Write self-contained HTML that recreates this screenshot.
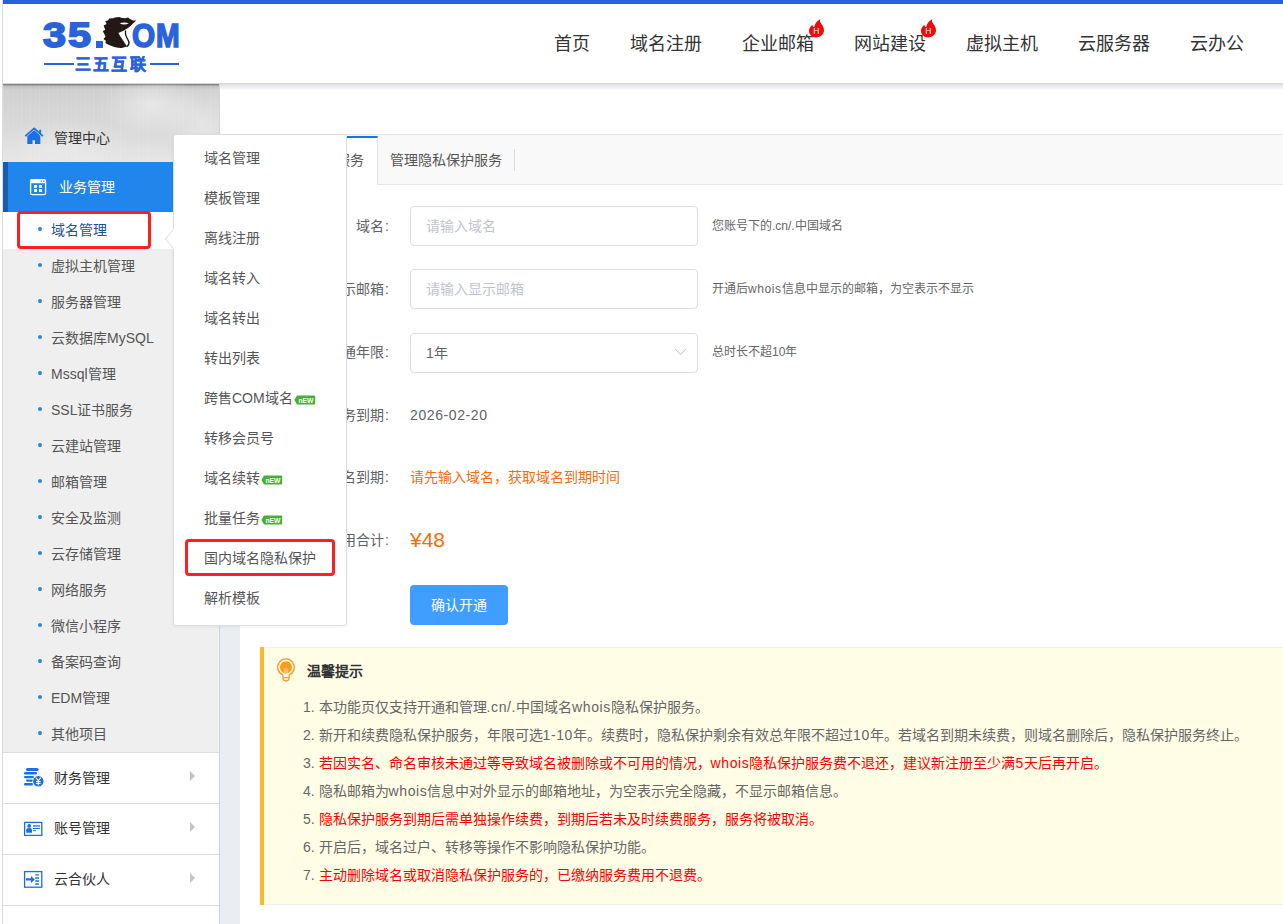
<!DOCTYPE html>
<html lang="zh-CN"><head><meta charset="utf-8">
<style>
*{margin:0;padding:0;box-sizing:border-box}
html,body{width:1283px;height:924px;overflow:hidden;background:#fff}
body{position:relative;font-family:"Liberation Sans",sans-serif;color:#333;font-size:14px}
.abs{position:absolute}
.t{position:absolute;white-space:nowrap;line-height:1}
/* frame */
#lline{left:2px;top:0;width:1px;height:924px;background:#dcdcdc}
#topbar{left:3px;top:0;width:1280px;height:4px;background:#2563de}
#header{left:3px;top:4px;width:1280px;height:79px;background:#fff}
#hshadow{left:220px;top:84px;width:1063px;height:6px;background:linear-gradient(#dcdee1,rgba(255,255,255,0))}
#hline{left:3px;top:83px;width:1280px;height:1px;background:#d3d6da}
/* sidebar */
#side{left:3px;top:83px;width:216px;height:841px;background:#fff}
#sborder{left:219px;top:83px;width:1px;height:841px;background:#d4d4d4}
#strip{left:220px;top:134px;width:20px;height:790px;background:#eaedf2}
#tex{left:3px;top:83px;width:216px;height:79px;
 background:
 repeating-linear-gradient(90deg,rgba(255,255,255,.07) 0 1px,rgba(255,255,255,0) 1px 5px,rgba(255,255,255,.04) 5px 6px,rgba(255,255,255,0) 6px 9px),
 radial-gradient(ellipse 50px 30px at 150px 22px,rgba(255,255,255,.45),rgba(255,255,255,0)),
 radial-gradient(ellipse 40px 40px at 200px 40px,rgba(255,255,255,.3),rgba(255,255,255,0)),
 radial-gradient(ellipse 70px 25px at 60px 62px,rgba(255,255,255,.25),rgba(255,255,255,0)),
 linear-gradient(#d3d6da 0,#d3d6da 1px,#7d7d7d 1px,#8a8a8a 2px,#c0c0c0 3px,#d0d0d0 7px,#d6d6d6 30px,#dcdcdc 55px,#e6e6e6 79px)}
#active{left:3px;top:162px;width:216px;height:50px;background:#2186ec;border-left:5px solid #1a5bab}
#sub{left:3px;top:212px;width:216px;height:540px;background:#efefef}
#subsel{left:3px;top:212px;width:170px;height:37px;background:#fff}
.sitem{position:absolute;left:51px;font-size:14px;color:#555;line-height:1}
.dot{position:absolute;left:38px;width:4px;height:4px;border-radius:50%;background:#2385e8}
.sep{position:absolute;left:3px;width:216px;height:1px;background:#dedede}
.arr{position:absolute;left:190px;width:0;height:0;border-left:5px solid #c4c4c4;border-top:5px solid transparent;border-bottom:5px solid transparent}
</style></head><body>
<div id="lline" class="abs"></div>
<div id="header" class="abs"></div>
<div id="topbar" class="abs"></div>

<div id="side" class="abs"></div>
<div id="tex" class="abs"></div>
<div id="sborder" class="abs"></div>
<div id="strip" class="abs"></div>
<div id="hshadow" class="abs"></div>
<div id="hline" class="abs"></div>
<div id="active" class="abs"></div>
<div id="sub" class="abs"></div>
<div id="subsel" class="abs"></div>
<div class="dot" style="top:227px"></div><div class="sitem" style="top:223px;color:#1d4f9e">域名管理</div>
<div class="dot" style="top:263px"></div><div class="sitem" style="top:259px">虚拟主机管理</div>
<div class="dot" style="top:299px"></div><div class="sitem" style="top:295px">服务器管理</div>
<div class="dot" style="top:335px"></div><div class="sitem" style="top:331px">云数据库MySQL</div>
<div class="dot" style="top:371px"></div><div class="sitem" style="top:367px">Mssql管理</div>
<div class="dot" style="top:407px"></div><div class="sitem" style="top:403px">SSL证书服务</div>
<div class="dot" style="top:443px"></div><div class="sitem" style="top:439px">云建站管理</div>
<div class="dot" style="top:479px"></div><div class="sitem" style="top:475px">邮箱管理</div>
<div class="dot" style="top:515px"></div><div class="sitem" style="top:511px">安全及监测</div>
<div class="dot" style="top:551px"></div><div class="sitem" style="top:547px">云存储管理</div>
<div class="dot" style="top:587px"></div><div class="sitem" style="top:583px">网络服务</div>
<div class="dot" style="top:623px"></div><div class="sitem" style="top:619px">微信小程序</div>
<div class="dot" style="top:659px"></div><div class="sitem" style="top:655px">备案码查询</div>
<div class="dot" style="top:695px"></div><div class="sitem" style="top:691px">EDM管理</div>
<div class="dot" style="top:731px"></div><div class="sitem" style="top:727px">其他项目</div>
<div class="sep" style="top:752px"></div>
<div class="sep" style="top:803px"></div>
<div class="sep" style="top:854px"></div>
<div class="sep" style="top:905px"></div>
<div class="arr" style="top:771px"></div>
<div class="arr" style="top:822px"></div>
<div class="arr" style="top:873px"></div>
<svg class="abs" style="left:20px;top:122px" width="30" height="28" viewBox="0 0 30 28"><path d="M5.3 14.2L14.2 6.3L22.9 14.2" fill="none" stroke="#1a6ee6" stroke-width="1.7"/><rect x="19.2" y="7.8" width="1.9" height="3.2" fill="#1a6ee6"/><path d="M7.3 14.2L14.2 8.2L20.3 13.7V22H15V18.3H12.5V22H7.3z" fill="#1a6ee6"/></svg>
<div class="t" style="left:54px;top:131px;font-size:14px;color:#333">管理中心</div>
<svg class="abs" style="left:24px;top:173px" width="30" height="28" viewBox="0 0 30 28"><rect x="6.6" y="6.6" width="15" height="15" rx="1.6" fill="none" stroke="#fff" stroke-width="1.3"/><rect x="6.6" y="6.6" width="15" height="3.6" fill="#fff"/><circle cx="17.3" cy="8.3" r=".75" fill="#2385e8"/><circle cx="19.8" cy="8.3" r=".75" fill="#2385e8"/><rect x="10" y="12" width="3" height="2.8" fill="#fff"/><rect x="15" y="12" width="3" height="2.8" fill="#fff"/><rect x="10" y="16" width="3" height="3" fill="#fff"/><rect x="15" y="16" width="3" height="3" fill="#fff"/></svg>
<div class="t" style="left:59px;top:180px;font-size:14px;color:#fff">业务管理</div>
<svg class="abs" style="left:18px;top:762px" width="32" height="28" viewBox="0 0 32 28"><g fill="#1a6ee6"><rect x="8" y="6" width="12.7" height="3" rx="1.5"/><rect x="6" y="10" width="13" height="2.6" rx="1.3"/><rect x="6" y="14" width="10" height="2.3" rx="1.1"/><rect x="8" y="17.5" width="7" height="2.2" rx="1.1"/><rect x="6" y="21" width="9" height="2.6" rx="1.3"/></g><circle cx="20.3" cy="19.3" r="5.8" fill="#fff"/><circle cx="20.3" cy="19.3" r="5.2" fill="#1a6ee6"/><path d="M17.8 15.5L20.3 18.8L22.8 15.5M20.3 18.8V23.5M18 19.6H22.6M18 21.5H22.6" fill="none" stroke="#fff" stroke-width="1.1"/></svg>
<div class="t" style="left:54px;top:771px;font-size:14px;color:#333">财务管理</div>
<svg class="abs" style="left:18px;top:815px" width="32" height="28" viewBox="0 0 32 28"><rect x="6.6" y="7.4" width="17.2" height="13" fill="none" stroke="#1a6ee6" stroke-width="1.3"/><circle cx="11.2" cy="10.9" r="1.9" fill="#1a6ee6"/><path d="M8.2 17.7V15.3Q8.2 13 11.1 13Q14 13 14 15.3V17.7z" fill="#1a6ee6"/><rect x="15" y="10.3" width="7" height="1.3" fill="#1a6ee6"/><rect x="15" y="12.9" width="7" height="1.1" fill="#1a6ee6"/><rect x="15" y="15.2" width="3" height="1" fill="#1a6ee6"/></svg>
<div class="t" style="left:54px;top:821px;font-size:14px;color:#333">账号管理</div>
<svg class="abs" style="left:18px;top:866px" width="32" height="28" viewBox="0 0 32 28"><rect x="6.6" y="5.6" width="17.2" height="15.6" fill="none" stroke="#1a6ee6" stroke-width="1.3"/><path d="M8 12.3H13V10.1L16.8 13.4L13 16.9V14.6H8z" fill="#1a6ee6"/><g fill="#1a6ee6"><rect x="17.1" y="8.2" width="4" height="1.4" rx=".5"/><rect x="17.1" y="11.3" width="4" height="1.4" rx=".5"/><rect x="17.1" y="14.3" width="4" height="1.4" rx=".5"/><rect x="17.1" y="17.3" width="4" height="1.4" rx=".5"/></g></svg>
<div class="t" style="left:54px;top:872px;font-size:14px;color:#333">云合伙人</div>
<div class="t" style="left:554px;top:35px;font-size:18px;color:#333">首页</div>
<div class="t" style="left:630px;top:35px;font-size:18px;color:#333">域名注册</div>
<div class="t" style="left:742px;top:35px;font-size:18px;color:#333">企业邮箱</div>
<div class="t" style="left:854px;top:35px;font-size:18px;color:#333">网站建设</div>
<div class="t" style="left:966px;top:35px;font-size:18px;color:#333">虚拟主机</div>
<div class="t" style="left:1078px;top:35px;font-size:18px;color:#333">云服务器</div>
<div class="t" style="left:1190px;top:35px;font-size:18px;color:#333">云办公</div>
<svg class="abs" style="left:807px;top:18px" width="18" height="20" viewBox="0 0 18 20"><path d="M9 19.5c-4 0-7-2.9-7-6.7 0-2.6 1.5-4.6 3.4-6.1.2 1.3.9 2.2 1.8 2.6C7.5 6 9.6 3 13.3 1.2c-.7 2 .1 3.4 1.3 5 1.2 1.5 2.4 3.4 2.4 5.9 0 4.1-3.4 7.4-8 7.4z" fill="#f20a0a"/><text x="9.2" y="16.2" font-size="8.5" font-family="Liberation Sans" fill="#fff" text-anchor="middle">H</text></svg>
<svg class="abs" style="left:919px;top:18px" width="18" height="20" viewBox="0 0 18 20"><path d="M9 19.5c-4 0-7-2.9-7-6.7 0-2.6 1.5-4.6 3.4-6.1.2 1.3.9 2.2 1.8 2.6C7.5 6 9.6 3 13.3 1.2c-.7 2 .1 3.4 1.3 5 1.2 1.5 2.4 3.4 2.4 5.9 0 4.1-3.4 7.4-8 7.4z" fill="#f20a0a"/><text x="9.2" y="16.2" font-size="8.5" font-family="Liberation Sans" fill="#fff" text-anchor="middle">H</text></svg>
<div class="t" style="left:43px;top:17px;font-size:35px;font-weight:bold;color:#2a62dc;-webkit-text-stroke:1.8px #2a62dc;transform:scaleX(1.18);transform-origin:0 0">3</div>
<div class="t" style="left:68px;top:17px;font-size:35px;font-weight:bold;color:#2a62dc;-webkit-text-stroke:1.8px #2a62dc;transform:scaleX(1.18);transform-origin:0 0">5</div>
<div class="abs" style="left:96px;top:41px;width:7px;height:7px;background:#2a62dc"></div>
<div class="t" style="left:131.5px;top:19px;font-size:33px;font-weight:bold;color:#2a62dc;-webkit-text-stroke:1.6px #2a62dc;transform:scaleX(0.9);transform-origin:0 0">O</div>
<div class="t" style="left:156px;top:19px;font-size:33px;font-weight:bold;color:#2a62dc;-webkit-text-stroke:1.6px #2a62dc;transform:scaleX(0.86);transform-origin:0 0">M</div>
<svg class="abs" style="left:95px;top:12px" width="50" height="40" viewBox="0 0 50 40"><path d="M14.3 6.5L18 6.2L20 5.4L24.2 5L27 6L30.5 6.3L33 5.6L34.6 6.8L38 8.5L41.2 8.6L38 11.5L35.5 14L33 16L28 19L23.4 21C25 24.5 28.5 28.5 31.8 34.2C29 35.8 26 36.2 23 35.8C18 35 13.5 33 10.3 31L11 29L8.5 27L10.5 24.5L7.8 19L10.2 17.8L8.6 13.5L11.6 12L10.2 9L13 8.6Z" fill="#231815"/><path d="M30.6 18.5C29.8 22 31.3 25 32.8 27.5C34.4 30.2 34.2 33 31.6 34.8" fill="none" stroke="#231815" stroke-width="1.4"/><path d="M24.7 11.3C27.5 13 31 12.8 33.8 11.3C31 10.3 27.3 10.4 24.7 11.3Z" fill="#fff"/></svg>
<div class="abs" style="left:44px;top:63px;width:30px;height:2px;background:#2a62dc"></div>
<div class="abs" style="left:150px;top:63px;width:29px;height:2px;background:#2a62dc"></div>
<div class="t" style="left:75px;top:56.5px;font-size:16px;font-weight:bold;color:#2a62dc;letter-spacing:2.2px;-webkit-text-stroke:0.5px #2a62dc">三五互联</div>
<div class="abs" style="left:260px;top:134px;width:1023px;height:51px;background:#f9f9f9;border-top:1px solid #e6e6e6;border-bottom:1px solid #e6e6e6"></div>
<div class="abs" style="left:260px;top:136px;width:118px;height:49px;background:#fff;border-top:2px solid #1a73e0;border-left:1px solid #e6e6e6;border-right:1px solid #e6e6e6"></div>
<div class="t" style="left:280px;top:153px;font-size:14px;color:#555">开通隐私服务</div>
<div class="t" style="left:390px;top:153px;font-size:14px;color:#555">管理隐私保护服务</div>
<div class="abs" style="left:514px;top:149px;width:1px;height:22px;background:#ddd"></div>

<div class="t" style="left:284px;top:219px;font-size:14px;color:#606266;width:100px;text-align:right">域名</div><div class="t" style="left:385px;top:219px;font-size:14px;color:#606266">:</div>
<div class="abs" style="left:410px;top:206px;width:288px;height:40px;border:1px solid #dcdfe6;border-radius:4px;background:#fff"></div>
<div class="t" style="left:426px;top:219px;font-size:14px;color:#c0c4cc">请输入域名</div>
<div class="t" style="left:712px;top:220px;font-size:12px;color:#666">您账号下的.cn/.中国域名</div>

<div class="t" style="left:284px;top:282px;font-size:14px;color:#606266;width:100px;text-align:right">显示邮箱</div><div class="t" style="left:385px;top:282px;font-size:14px;color:#606266">:</div>
<div class="abs" style="left:410px;top:269px;width:288px;height:40px;border:1px solid #dcdfe6;border-radius:4px;background:#fff"></div>
<div class="t" style="left:426px;top:282px;font-size:14px;color:#c0c4cc">请输入显示邮箱</div>
<div class="t" style="left:712px;top:283px;font-size:12px;color:#666">开通后<span style="letter-spacing:.6px">whois</span>信息中显示的邮箱，为空表示不显示</div>

<div class="t" style="left:284px;top:345px;font-size:14px;color:#606266;width:100px;text-align:right">开通年限</div><div class="t" style="left:385px;top:345px;font-size:14px;color:#606266">:</div>
<div class="abs" style="left:410px;top:333px;width:288px;height:40px;border:1px solid #dcdfe6;border-radius:4px;background:#fff"></div>
<div class="t" style="left:426px;top:346px;font-size:14px;color:#606266">1年</div>
<svg class="abs" style="left:674px;top:346px" width="14" height="10" viewBox="0 0 14 10"><path d="M1.2 3L6.5 8.4L11.8 3" fill="none" stroke="#b9bdc6" stroke-width="1"/></svg>
<div class="t" style="left:712px;top:346px;font-size:12px;color:#666">总时长不超10年</div>

<div class="t" style="left:284px;top:408px;font-size:14px;color:#606266;width:100px;text-align:right">服务到期</div><div class="t" style="left:385px;top:408px;font-size:14px;color:#606266">:</div>
<div class="t" style="left:410px;top:408px;font-size:14px;color:#606266;letter-spacing:0.6px">2026-02-20</div>

<div class="t" style="left:284px;top:470px;font-size:14px;color:#606266;width:100px;text-align:right">域名到期</div><div class="t" style="left:385px;top:470px;font-size:14px;color:#606266">:</div>
<div class="t" style="left:410px;top:470px;font-size:14px;color:#fd6a08">请先输入域名，获取域名到期时间</div>

<div class="t" style="left:284px;top:533px;font-size:14px;color:#606266;width:100px;text-align:right">费用合计</div><div class="t" style="left:385px;top:533px;font-size:14px;color:#606266">:</div>
<div class="t" style="left:410px;top:529px;font-size:21px;color:#fd6a08">¥48</div>

<div class="abs" style="left:410px;top:585px;width:98px;height:40px;border-radius:4px;background:#409eff"></div>
<div class="t" style="left:431px;top:598px;font-size:14px;color:#fff">确认开通</div>

<div class="abs" style="left:260px;top:647px;width:1023px;height:258px;background:#fffde6;border-top:1px solid #eeeeee;border-bottom:1px solid #eeeeee"></div>
<div class="abs" style="left:260px;top:647px;width:4px;height:258px;background:#fbb82a"></div>
<svg class="abs" style="left:266px;top:650px" width="40" height="40" viewBox="0 0 40 40"><path d="M16.6 24.8A8.3 8.3 0 1 1 23.4 24.8L22.7 29.8Q20 32.2 17.3 29.8z" fill="none" stroke="#f99a2c" stroke-width="1.35" stroke-linejoin="round"/><path d="M17.2 27.6H22.8" stroke="#f99a2c" stroke-width="1.2"/><circle cx="20" cy="17.3" r="6" fill="#fb9b1c"/><rect x="17.7" y="18.2" width="4.6" height="5.3" fill="#fdbd6a"/></svg>
<div class="t" style="left:307px;top:664px;font-size:14px;font-weight:bold;color:#333">温馨提示</div>
<div class="t" style="left:303px;top:700px;font-size:14px;color:#666">1. 本功能页仅支持开通和管理<span style="letter-spacing:.6px">.cn/.</span>中国域名<span style="letter-spacing:.6px">whois</span>隐私保护服务。</div>
<div class="t" style="left:303px;top:728px;font-size:14px;color:#666">2. 新开和续费隐私保护服务，年限可选<span style="letter-spacing:.6px">1-10</span>年。续费时，隐私保护剩余有效总年限不超过<span style="letter-spacing:.6px">10</span>年。若域名到期未续费，则域名删除后，隐私保护服务终止。</div>
<div class="t" style="left:303px;top:756px;font-size:14px;color:#666">3. <span style="color:#f00">若因实名、命名审核未通过等导致域名被删除或不可用的情况，<span style="letter-spacing:.6px">whois</span>隐私保护服务费不退还，建议新注册至少满<span style="letter-spacing:.6px">5</span>天后再开启。</span></div>
<div class="t" style="left:303px;top:784px;font-size:14px;color:#666">4. 隐私邮箱为<span style="letter-spacing:.6px">whois</span>信息中对外显示的邮箱地址，为空表示完全隐藏，不显示邮箱信息。</div>
<div class="t" style="left:303px;top:812px;font-size:14px;color:#666">5. <span style="color:#f00">隐私保护服务到期后需单独操作续费，到期后若未及时续费服务，服务将被取消。</span></div>
<div class="t" style="left:303px;top:840px;font-size:14px;color:#666">6. 开启后，域名过户、转移等操作不影响隐私保护功能。</div>
<div class="t" style="left:303px;top:868px;font-size:14px;color:#666">7. <span style="color:#f00">主动删除域名或取消隐私保护服务的，已缴纳服务费用不退费。</span></div>
<div class="abs" style="left:173px;top:134px;width:174px;height:492px;background:#fff;border:1px solid #dcdcdc;border-radius:3px;box-shadow:0 1px 4px rgba(0,0,0,.06)"></div>
<svg class="abs" style="left:164px;top:228px" width="11" height="22" viewBox="0 0 11 22"><path d="M10 1L1.2 11L10 21" fill="#fff" stroke="#dcdcdc" stroke-width="1"/><rect x="9.5" y="0" width="2" height="22" fill="#fff"/></svg>
<div class="t" style="left:204px;top:151px;font-size:14px;color:#555">域名管理</div>
<div class="t" style="left:204px;top:191px;font-size:14px;color:#555">模板管理</div>
<div class="t" style="left:204px;top:231px;font-size:14px;color:#555">离线注册</div>
<div class="t" style="left:204px;top:271px;font-size:14px;color:#555">域名转入</div>
<div class="t" style="left:204px;top:311px;font-size:14px;color:#555">域名转出</div>
<div class="t" style="left:204px;top:351px;font-size:14px;color:#555">转出列表</div>
<div class="t" style="left:204px;top:391px;font-size:14px;color:#555">跨售COM域名<svg style="vertical-align:middle;margin-left:1px;position:relative;top:1px" width="22" height="10" viewBox="0 0 22 10"><path d="M3 .6H20.4Q21.2 .6 21.2 1.4V8.6Q21.2 9.4 20.4 9.4H3L.4 5z" fill="#46b034"/><text x="12" y="8.2" font-size="7.5" font-family="Liberation Sans" font-weight="bold" fill="#fff" text-anchor="middle" textLength="15" lengthAdjust="spacingAndGlyphs">nEW</text></svg></div>
<div class="t" style="left:204px;top:431px;font-size:14px;color:#555">转移会员号</div>
<div class="t" style="left:204px;top:471px;font-size:14px;color:#555">域名续转<svg style="vertical-align:middle;margin-left:1px;position:relative;top:1px" width="22" height="10" viewBox="0 0 22 10"><path d="M3 .6H20.4Q21.2 .6 21.2 1.4V8.6Q21.2 9.4 20.4 9.4H3L.4 5z" fill="#46b034"/><text x="12" y="8.2" font-size="7.5" font-family="Liberation Sans" font-weight="bold" fill="#fff" text-anchor="middle" textLength="15" lengthAdjust="spacingAndGlyphs">nEW</text></svg></div>
<div class="t" style="left:204px;top:511px;font-size:14px;color:#555">批量任务<svg style="vertical-align:middle;margin-left:1px;position:relative;top:1px" width="22" height="10" viewBox="0 0 22 10"><path d="M3 .6H20.4Q21.2 .6 21.2 1.4V8.6Q21.2 9.4 20.4 9.4H3L.4 5z" fill="#46b034"/><text x="12" y="8.2" font-size="7.5" font-family="Liberation Sans" font-weight="bold" fill="#fff" text-anchor="middle" textLength="15" lengthAdjust="spacingAndGlyphs">nEW</text></svg></div>
<div class="t" style="left:204px;top:551px;font-size:14px;color:#555">国内域名隐私保护</div>
<div class="t" style="left:204px;top:591px;font-size:14px;color:#555">解析模板</div>
<div class="abs" style="left:185px;top:539px;width:150px;height:37px;border:3px solid #ff1f1f;border-radius:4px"></div>
<div class="abs" style="left:17px;top:211px;width:134px;height:38px;border:3px solid #ff1f1f;border-radius:4px"></div>

</body></html>
